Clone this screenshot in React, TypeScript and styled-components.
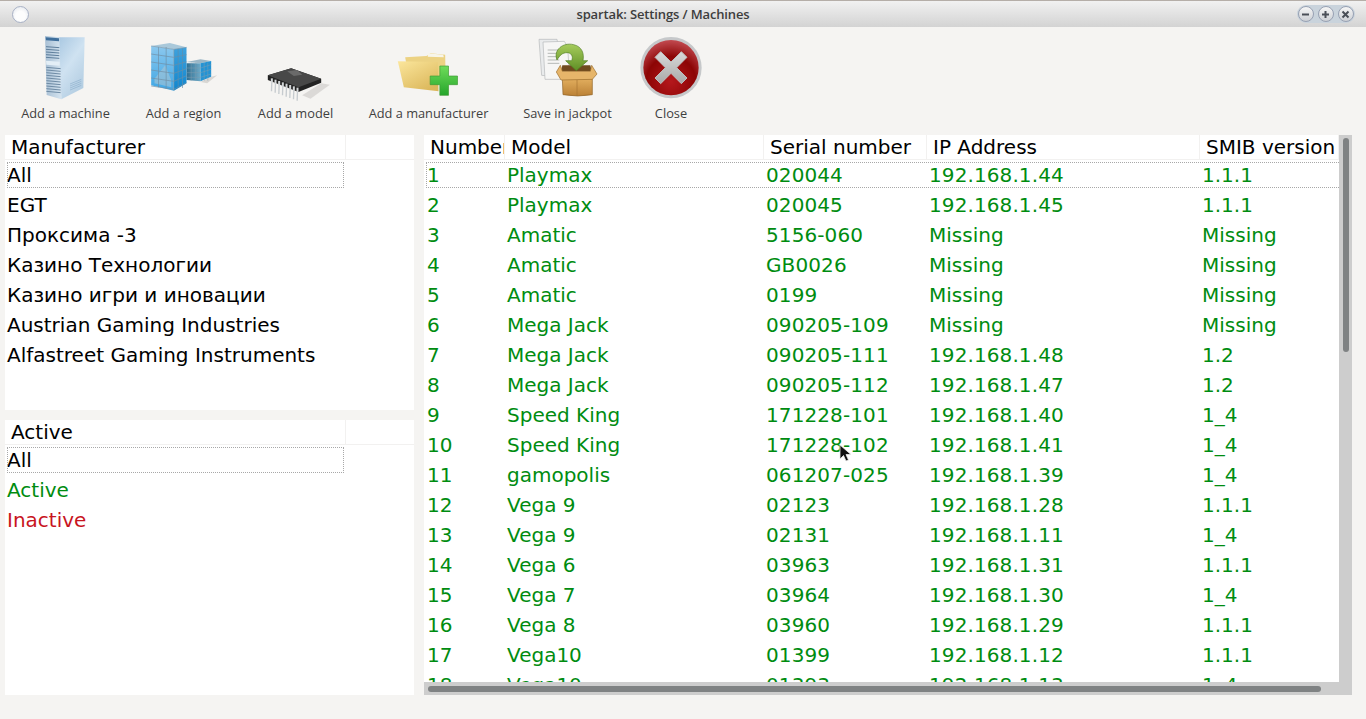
import React from "react";
import styled, { createGlobalStyle } from "styled-components";

const Global = createGlobalStyle`
  html, body { margin: 0; padding: 0; background: #f5f4f2; }
  #root { width: 1366px; height: 719px; overflow: hidden; }
`;

const Window = styled.div`
  position: relative;
  width: 1366px;
  height: 719px;
  display: flex;
  flex-direction: column;
  background: #f5f4f2;
  overflow: hidden;
`;

const TitleBar = styled.header`
  height: 26px;
  flex: none;
  display: flex;
  align-items: center;
  justify-content: space-between;
  padding: 0 11px 0 12px;
  border-top: 1px solid #b5aea8;
  background: linear-gradient(#f1f1f1, #d3d3d3);
`;

const MenuOrb = styled.span`
  width: 15px;
  height: 15px;
  border-radius: 50%;
  border: 1px solid #a9b2c6;
  background: radial-gradient(circle at 50% 60%, #fdfdfd 40%, #dfe3ea);
`;

const Title = styled.div`
  font: 600 13px "Open Sans", sans-serif;
  letter-spacing: -0.01em;
  color: #3d3d3d;
`;

const Controls = styled.div`
  display: flex;
  gap: 4px;
  padding: 1px;
  border-radius: 9px;
  background: #c9d3dc;
`;

const Control = styled.button`
  width: 16px;
  height: 16px;
  padding: 0;
  box-sizing: border-box;
  border: 1px solid #98a1b3;
  border-radius: 50%;
  background: linear-gradient(#f6f6f6, #cdd0d5);
  display: flex;
  align-items: center;
  justify-content: center;
`;

const Toolbar = styled.nav`
  height: 108px;
  flex: none;
  display: flex;
  align-items: flex-start;
  gap: 35px;
  padding: 9px 0 0 21px;
  box-sizing: border-box;
`;

const ToolButton = styled.div<{ $width: number; $tight?: boolean }>`
  width: ${(p) => p.$width}px;
  display: flex;
  flex-direction: column;
  align-items: center;
  margin-left: ${(p) => (p.$tight ? "-8px" : "0")};
`;

const ToolIcon = styled.svg`
  width: 64px;
  height: 64px;
  flex: none;
  overflow: visible;
  display: block;
  filter: blur(0.35px);
`;

const ToolLabel = styled.span`
  font: 400 12.8px/18px "Open Sans", sans-serif;
  color: #3f3f3f;
  margin-top: 4px;
  white-space: nowrap;
`;

const Content = styled.main`
  flex: none;
  height: 560px;
  display: flex;
  gap: 10px;
  padding-left: 5px;
`;

const LeftColumn = styled.div`
  width: 409px;
  display: flex;
  flex-direction: column;
  gap: 10px;
`;

const ListPanel = styled.section`
  flex: 1;
  background: #fff;
  font: 20px "DejaVu Sans", sans-serif;
  overflow: hidden;
`;

const ListHeader = styled.div`
  height: 25px;
  display: flex;
  box-sizing: border-box;
  border-bottom: 1px solid #f2f1f0;
  line-height: 24px;
  color: #000;
`;

const ListHeaderCell = styled.div`
  width: 341px;
  box-sizing: border-box;
  padding-left: 6px;
  border-right: 1px solid #f2f1f0;
`;

const ListRow = styled.div<{ $tone?: string; $focus?: boolean }>`
  position: relative;
  height: 30px;
  line-height: 30px;
  padding-left: 2px;
  white-space: nowrap;
  color: ${(p) => p.$tone || "#000"};
  ${(p) =>
    p.$focus
      ? `&::after {
          content: "";
          position: absolute;
          left: 2px;
          top: 2px;
          width: 337px;
          height: 26px;
          box-sizing: border-box;
          border: 1px dotted #a8a8a8;
        }`
      : ""}
`;

const TablePanel = styled.section`
  width: 928px;
  display: flex;
  flex-direction: column;
`;

const TableBody = styled.div`
  height: 547px;
  display: flex;
`;

const TableView = styled.div`
  width: 915px;
  background: #fff;
  overflow: hidden;
  font: 20px "DejaVu Sans", sans-serif;
`;

const COLS = "81px 259px 163px 273px 139px";

const HeadRow = styled.div`
  height: 25px;
  display: grid;
  grid-template-columns: ${COLS};
  box-sizing: border-box;
  border-bottom: 1px solid #f2f1f0;
  line-height: 24px;
  color: #000;
`;

const HeadCell = styled.div`
  padding-left: 6px;
  overflow: hidden;
  white-space: nowrap;
  box-sizing: border-box;
  border-right: 1px solid #f2f1f0;
`;

const DataRow = styled.div<{ $focus?: boolean }>`
  position: relative;
  display: grid;
  grid-template-columns: ${COLS};
  height: 30px;
  line-height: 30px;
  color: #008c10;
  white-space: nowrap;
  ${(p) =>
    p.$focus
      ? `&::after {
          content: "";
          position: absolute;
          left: 2px;
          right: 0;
          top: 2px;
          height: 26px;
          box-sizing: border-box;
          border: 1px dotted #a8a8a8;
          border-right: none;
        }`
      : ""}
`;

const DataCell = styled.div<{ $first?: boolean; $digits?: boolean }>`
  padding-left: ${(p) => (p.$first ? "3px" : "2px")};
  letter-spacing: ${(p) => (p.$digits ? "0.1px" : "0")};
`;

const VTrack = styled.div`
  width: 13px;
  box-sizing: border-box;
  padding: 3px 4px;
  background: #cdcdcd;
`;

const VThumb = styled.div`
  width: 6px;
  height: 214px;
  border-radius: 3px;
  background: #7f8283;
`;

const HTrack = styled.div`
  height: 13px;
  box-sizing: border-box;
  padding: 4px 4px 3px;
  background: #cdcdcd;
`;

const HThumb = styled.div`
  width: 893px;
  height: 6px;
  border-radius: 3px;
  background: #7f8283;
`;

const Pointer = styled.svg`
  position: absolute;
  left: 839px;
  top: 444px;
  width: 14px;
  height: 20px;
`;

const rows = [
  ["1", "Playmax", "020044", "192.168.1.44", "1.1.1"],
  ["2", "Playmax", "020045", "192.168.1.45", "1.1.1"],
  ["3", "Amatic", "5156-060", "Missing", "Missing"],
  ["4", "Amatic", "GB0026", "Missing", "Missing"],
  ["5", "Amatic", "0199", "Missing", "Missing"],
  ["6", "Mega Jack", "090205-109", "Missing", "Missing"],
  ["7", "Mega Jack", "090205-111", "192.168.1.48", "1.2"],
  ["8", "Mega Jack", "090205-112", "192.168.1.47", "1.2"],
  ["9", "Speed King", "171228-101", "192.168.1.40", "1_4"],
  ["10", "Speed King", "171228-102", "192.168.1.41", "1_4"],
  ["11", "gamopolis", "061207-025", "192.168.1.39", "1_4"],
  ["12", "Vega 9", "02123", "192.168.1.28", "1.1.1"],
  ["13", "Vega 9", "02131", "192.168.1.11", "1_4"],
  ["14", "Vega 6", "03963", "192.168.1.31", "1.1.1"],
  ["15", "Vega 7", "03964", "192.168.1.30", "1_4"],
  ["16", "Vega 8", "03960", "192.168.1.29", "1.1.1"],
  ["17", "Vega10", "01399", "192.168.1.12", "1.1.1"],
  ["18", "Vega10", "01393", "192.168.1.13", "1_4"],
];

const manufacturers = [
  "EGT",
  "Проксима -3",
  "Казино Технологии",
  "Казино игри и иновации",
  "Austrian Gaming Industries",
  "Alfastreet Gaming Instruments",
];

const ServerIcon = () => (
  <ToolIcon viewBox="102 108 192 192">
    <defs>
      <linearGradient id="srvR" x1="0" y1="0" x2="0.6" y2="1">
        <stop offset="0" stopColor="#a9c8e2" />
        <stop offset="0.5" stopColor="#cfe2f1" />
        <stop offset="1" stopColor="#b3cde2" />
      </linearGradient>
      <linearGradient id="srvF" x1="0" y1="0" x2="1" y2="0">
        <stop offset="0" stopColor="#a8bfd4" />
        <stop offset="1" stopColor="#d5e4f0" />
      </linearGradient>
    </defs>
    <path d="M176 112 L254 112 L250 264 L184 298 Z" fill="url(#srvR)" />
    <path d="M135 108 L178 112 L184 298 L140 285 Z" fill="url(#srvF)" />
    <path d="M137 112 L177 115 L177 124 L138 121 Z" fill="#3f6f9c" />
    {[140, 148, 156, 164, 172].map((y) => (
      <path key={y} d={`M138 ${y} L178 ${y + 3}`} stroke="#5f7f9c" strokeWidth="3" />
    ))}
    <path d="M138 182 L179 185 L179 197 L139 194 Z" fill="#e3eef6" />
    {[202, 210, 218, 226, 234, 242, 250, 258, 266, 274].map((y) => (
      <path key={y} d={`M139 ${y} L182 ${y + 4}`} stroke="#6e8ba5" strokeWidth="3" />
    ))}
    {[252, 258, 264, 270].map((y) => (
      <path key={y} d={`M210 ${y} L244 ${y - 14}`} stroke="#8eb0cd" strokeWidth="2" />
    ))}
  </ToolIcon>
);

const BuildingIcon = () => (
  <ToolIcon viewBox="454.5 108 192 192">
    <defs>
      <linearGradient id="bldL" x1="0" y1="0" x2="0" y2="1">
        <stop offset="0" stopColor="#8cc8ee" />
        <stop offset="1" stopColor="#3ea6e4" />
      </linearGradient>
      <linearGradient id="bldR" x1="0" y1="0" x2="0" y2="1">
        <stop offset="0" stopColor="#3fa2dd" />
        <stop offset="1" stopColor="#0f86cf" />
      </linearGradient>
      <linearGradient id="bldS" x1="0" y1="0" x2="1" y2="0">
        <stop offset="0" stopColor="#2f6f92" />
        <stop offset="1" stopColor="#6eaac8" />
      </linearGradient>
    </defs>
    <path d="M600 246 L632 230 L650 226 L620 250 Z" fill="#d8d6d3" />
    <path d="M558 186 L600 178 L632 183 L600 190 Z" fill="#9ab6c6" />
    <path d="M558 190 L600 190 L600 244 L558 240 Z" fill="url(#bldS)" />
    <path d="M600 190 L632 183 L632 230 L600 244 Z" fill="#2393d4" />
    {[204, 218, 232].map((y) => (
      <path key={y} d={`M558 ${y} L600 ${y} L632 ${y - 10}`} stroke="#7f9cae" strokeWidth="1.5" fill="none" />
    ))}
    {[572, 586, 611, 622].map((x) => (
      <path key={x} d={`M${x} 188 V242`} stroke="#7f9cae" strokeWidth="1.5" />
    ))}
    <path d="M452 138 L508 129 L558 142 L520 148 Z" fill="#a9c8da" />
    <path d="M452 138 L520 148 L520 272 L452 256 Z" fill="url(#bldL)" />
    <path d="M520 148 L558 142 L558 250 L520 272 Z" fill="url(#bldR)" />
    <path d="M462 236 L494 196 L512 240 L512 262 L462 250 Z" fill="#a7c4d6" opacity="0.6" />
    {[0, 1, 2, 3, 4].map((i) => (
      <path
        key={i}
        d={`M452 ${162 + i * 24} L520 ${172 + i * 24} L558 ${164 + i * 21}`}
        stroke="#6f8ea5"
        strokeWidth="2"
        fill="none"
      />
    ))}
    {[474, 497].map((x) => (
      <path key={x} d={`M${x} 141 V${262 + (x - 474) / 5}`} stroke="#6f8ea5" strokeWidth="2" />
    ))}
    {[533, 546].map((x) => (
      <path key={x} d={`M${x} 146 V264`} stroke="#5f8eac" strokeWidth="2" />
    ))}
    <path d="M452 138 L520 148 L558 142 M520 148 V272" stroke="#7b97aa" strokeWidth="2" fill="none" />
  </ToolIcon>
);

const ChipIcon = () => (
  <ToolIcon viewBox="790.5 108 192 192">
    <path d="M905 286 L962 250 L988 254 L930 296 Z" fill="#d4d2d0" opacity="0.8" />
    {[0, 1, 2, 3, 4, 5, 6, 7].map((i) => (
      <path
        key={i}
        d={`M${814 + i * 11} ${244 + i * 4} l-1 30`}
        stroke="#c6cbcf"
        strokeWidth="4"
      />
    ))}
    <path d="M802 226 L872 205 L962 236 L962 248 L894 276 L802 240 Z" fill="#232323" />
    <path d="M802 226 L872 205 L962 236 L894 262 Z" fill="#484848" />
    <path d="M860 214 L890 210 L905 224 L880 228 Z" fill="#6a6a6a" />
    {[0, 1, 2, 3, 4, 5, 6, 7].map((i) => (
      <path
        key={i}
        d={`M${814 + i * 11} ${235 + i * 4} v13`}
        stroke="#d2d5d7"
        strokeWidth="6"
      />
    ))}
  </ToolIcon>
);

const FolderIcon = () => (
  <ToolIcon viewBox="139.5 108 192 192">
    <defs>
      <linearGradient id="fldr" x1="0" y1="0" x2="0.7" y2="1">
        <stop offset="0" stopColor="#fbe69c" />
        <stop offset="1" stopColor="#dcb85c" />
      </linearGradient>
      <linearGradient id="plus" x1="0" y1="0" x2="0" y2="1">
        <stop offset="0" stopColor="#6fdc5a" />
        <stop offset="1" stopColor="#25a52b" />
      </linearGradient>
    </defs>
    <path d="M164 172 L228 168 L240 160 L284 164 L286 250 L176 240 Z" fill="#ecd283" />
    <path d="M232 160 L278 164 L280 172 L232 170 Z" fill="#f7f5ea" />
    <path d="M142 184 L262 186 L264 274 L160 262 Z" fill="url(#fldr)" />
    <path
      d="M268 198 h26 v30 h27 v26 h-27 v32 h-26 v-32 h-29 v-26 h29 Z"
      fill="url(#plus)"
      stroke="#3e9a33"
      strokeWidth="2"
      strokeLinejoin="round"
    />
  </ToolIcon>
);

const JackpotIcon = () => (
  <ToolIcon viewBox="555 108 192 192">
    <defs>
      <linearGradient id="bx" x1="0" y1="0" x2="0" y2="1">
        <stop offset="0" stopColor="#e2ae5e" />
        <stop offset="1" stopColor="#bb8136" />
      </linearGradient>
      <linearGradient id="arw" x1="0" y1="0" x2="0" y2="1">
        <stop offset="0" stopColor="#a6cc5c" />
        <stop offset="1" stopColor="#5f8f25" />
      </linearGradient>
    </defs>
    <path d="M564 118 L618 118 L640 232 L572 226 Z" fill="#e9ebec" stroke="#b3b6b8" strokeWidth="2" />
    <path d="M576 126 L640 124 L650 140 L656 238 L582 238 Z" fill="#f6f6f5" stroke="#b3b6b8" strokeWidth="2" />
    {[150, 160, 170, 180, 190].map((y) => (
      <path key={y} d={`M590 ${y} H625`} stroke="#b5b9b6" strokeWidth="3" />
    ))}
    <path d="M634 196 L718 196 L722 214 L630 214 Z" fill="#6f4a1f" />
    <path
      d="M618 180 C606 150 636 126 668 134 C694 140 700 162 696 182 L710 182 L676 212 L644 182 L662 182 C668 168 660 158 648 158 C634 158 626 166 618 180 Z"
      fill="url(#arw)"
      stroke="#517f22"
      strokeWidth="2"
    />
    <path d="M634 236 H724 V284 Q680 292 636 284 Z" fill="url(#bx)" stroke="#8f6226" strokeWidth="2" />
    <path d="M628 196 L616 216 L630 240 L724 238 L738 222 L722 196 L718 214 L634 214 Z" fill="#e6b56a" stroke="#9a6c2c" strokeWidth="2" />
    <path d="M678 240 V288" stroke="#a87432" strokeWidth="2" />
  </ToolIcon>
);

const CloseIcon = () => (
  <ToolIcon viewBox="867 108 192 192">
    <defs>
      <radialGradient id="redB" cx="0.5" cy="0.75" r="0.75">
        <stop offset="0" stopColor="#b5181c" />
        <stop offset="0.6" stopColor="#8c0505" />
        <stop offset="1" stopColor="#c24a50" />
      </radialGradient>
      <linearGradient id="xG" x1="0" y1="0" x2="0" y2="1">
        <stop offset="0" stopColor="#d9d9d9" />
        <stop offset="1" stopColor="#a9a9a9" />
      </linearGradient>
    </defs>
    <circle cx="963" cy="203" r="92" fill="#c6c8ca" />
    <circle cx="963" cy="203" r="83" fill="url(#redB)" />
    <path
      d="M932 155 L963 186 L994 155 L1011 172 L980 203 L1011 234 L994 251 L963 220 L932 251 L915 234 L946 203 L915 172 Z"
      fill="url(#xG)"
      strokeLinejoin="round"
      stroke="#bdbdbd"
      strokeWidth="3"
    />
  </ToolIcon>
);

const ControlGlyph = ({ d }: { d: string }) => (
  <svg width="9" height="9" viewBox="0 0 9 9">
    <path d={d} stroke="#4a4f57" strokeWidth="2" fill="none" />
  </svg>
);

const tools = [
  { label: "Add a machine", width: 89, icon: <ServerIcon /> },
  { label: "Add a region", width: 77, icon: <BuildingIcon /> },
  { label: "Add a model", width: 77, icon: <ChipIcon /> },
  { label: "Add a manufacturer", width: 119, icon: <FolderIcon /> },
  { label: "Save in jackpot", width: 89, icon: <JackpotIcon /> },
  { label: "Close", width: 64, icon: <CloseIcon />, tight: true },
];

const headers = ["Number", "Model", "Serial number", "IP Address", "SMIB version"];

export default function App() {
  return (
    <Window>
      <Global />
      <TitleBar>
        <MenuOrb />
        <Title>spartak: Settings / Machines</Title>
        <Controls>
          <Control><ControlGlyph d="M1 4.5 H8" /></Control>
          <Control><ControlGlyph d="M1 4.5 H8 M4.5 1 V8" /></Control>
          <Control><ControlGlyph d="M1.5 1.5 L7.5 7.5 M7.5 1.5 L1.5 7.5" /></Control>
        </Controls>
      </TitleBar>
      <Toolbar>
        {tools.map((t) => (
          <ToolButton key={t.label} $width={t.width} $tight={t.tight}>
            {t.icon}
            <ToolLabel>{t.label}</ToolLabel>
          </ToolButton>
        ))}
      </Toolbar>
      <Content>
        <LeftColumn>
          <ListPanel>
            <ListHeader><ListHeaderCell>Manufacturer</ListHeaderCell></ListHeader>
            <ListRow $focus>All</ListRow>
            {manufacturers.map((m) => (
              <ListRow key={m}>{m}</ListRow>
            ))}
          </ListPanel>
          <ListPanel>
            <ListHeader><ListHeaderCell>Active</ListHeaderCell></ListHeader>
            <ListRow $focus>All</ListRow>
            <ListRow $tone="#008c10">Active</ListRow>
            <ListRow $tone="#c8141e">Inactive</ListRow>
          </ListPanel>
        </LeftColumn>
        <TablePanel>
          <TableBody>
            <TableView>
              <HeadRow>
                {headers.map((h) => (
                  <HeadCell key={h}>{h}</HeadCell>
                ))}
              </HeadRow>
              {rows.map((r, i) => (
                <DataRow key={r[0]} $focus={i === 0}>
                  {r.map((c, j) => (
                    <DataCell key={j} $first={j === 0} $digits={(j === 2 || j === 3) && c !== "Missing"}>{c}</DataCell>
                  ))}
                </DataRow>
              ))}
            </TableView>
            <VTrack><VThumb /></VTrack>
          </TableBody>
          <HTrack><HThumb /></HTrack>
        </TablePanel>
      </Content>
      <Pointer viewBox="0 0 14 20">
        <path d="M1 1 L1 15 L4.5 11.5 L7 17 L9.5 16 L7 10.5 L12 10.5 Z" fill="#111" stroke="#eee" strokeWidth="0.8" />
      </Pointer>
    </Window>
  );
}
